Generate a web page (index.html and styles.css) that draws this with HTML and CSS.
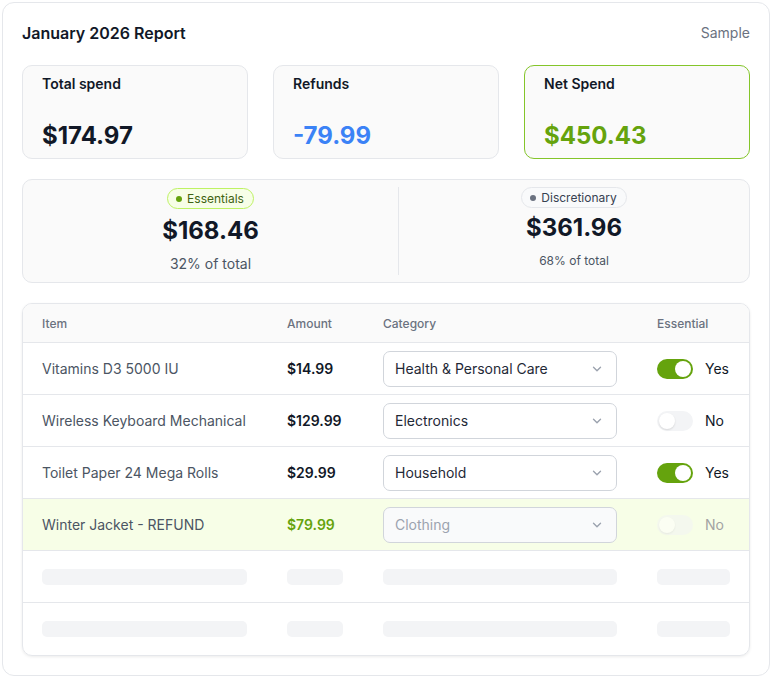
FILE: index.html
```html
<!DOCTYPE html>
<html lang="en">
<head>
<meta charset="utf-8">
<link rel="stylesheet" href="styles.css">
</head>
<body>
<div class="card">
  <div class="head">
    <h1 class="title">January 2026 Report</h1>
    <span class="sample">Sample</span>
  </div>

  <div class="stats">
    <div class="stat">
      <div class="stat-label">Total spend</div>
      <div class="stat-value">$174.97</div>
    </div>
    <div class="stat">
      <div class="stat-label">Refunds</div>
      <div class="stat-value blue">-79.99</div>
    </div>
    <div class="stat stat-net">
      <div class="stat-label">Net Spend</div>
      <div class="stat-value green">$450.43</div>
    </div>
  </div>

  <div class="split">
    <div class="half half-left">
      <span class="pill pill-green"><span class="dot"></span>Essentials</span>
      <div class="half-value">$168.46</div>
      <div class="half-sub">32% of total</div>
    </div>
    <div class="divider"></div>
    <div class="half half-right">
      <span class="pill pill-gray"><span class="dot"></span>Discretionary</span>
      <div class="half-value">$361.96</div>
      <div class="half-sub small">68% of total</div>
    </div>
  </div>

  <div class="table">
    <div class="row header">
      <div class="cell">Item</div>
      <div class="cell">Amount</div>
      <div class="cell">Category</div>
      <div class="cell">Essential</div>
    </div>

    <div class="row">
      <div class="cell item">Vitamins D3 5000 IU</div>
      <div class="cell amount">$14.99</div>
      <div class="cell"><div class="select"><span>Health &amp; Personal Care</span><svg class="chev" viewBox="0 0 12 12"><path d="M3 4.5 6 7.5 9 4.5"/></svg></div></div>
      <div class="cell ess"><span class="toggle on"><span class="knob"></span></span><span class="yn">Yes</span></div>
    </div>

    <div class="row">
      <div class="cell item">Wireless Keyboard Mechanical</div>
      <div class="cell amount">$129.99</div>
      <div class="cell"><div class="select"><span>Electronics</span><svg class="chev" viewBox="0 0 12 12"><path d="M3 4.5 6 7.5 9 4.5"/></svg></div></div>
      <div class="cell ess"><span class="toggle"><span class="knob"></span></span><span class="yn">No</span></div>
    </div>

    <div class="row">
      <div class="cell item">Toilet Paper 24 Mega Rolls</div>
      <div class="cell amount">$29.99</div>
      <div class="cell"><div class="select"><span>Household</span><svg class="chev" viewBox="0 0 12 12"><path d="M3 4.5 6 7.5 9 4.5"/></svg></div></div>
      <div class="cell ess"><span class="toggle on"><span class="knob"></span></span><span class="yn">Yes</span></div>
    </div>

    <div class="row refund">
      <div class="cell item">Winter Jacket - REFUND</div>
      <div class="cell amount green">$79.99</div>
      <div class="cell"><div class="select disabled"><span>Clothing</span><svg class="chev" viewBox="0 0 12 12"><path d="M3 4.5 6 7.5 9 4.5"/></svg></div></div>
      <div class="cell ess"><span class="toggle disabled"><span class="knob"></span></span><span class="yn muted">No</span></div>
    </div>

    <div class="row skel">
      <div class="cell"><span class="bar bar-item"></span></div>
      <div class="cell"><span class="bar bar-amt"></span></div>
      <div class="cell"><span class="bar bar-cat"></span></div>
      <div class="cell"><span class="bar bar-ess"></span></div>
    </div>

    <div class="row skel last">
      <div class="cell"><span class="bar bar-item"></span></div>
      <div class="cell"><span class="bar bar-amt"></span></div>
      <div class="cell"><span class="bar bar-cat"></span></div>
      <div class="cell"><span class="bar bar-ess"></span></div>
    </div>
  </div>
</div>
</body>
</html>
```

FILE: styles.css
```css
* { box-sizing: border-box; }
html, body { margin: 0; padding: 0; background: #ffffff; }
body {
  font-family: Inter, "Noto Sans", "Liberation Sans", sans-serif;
  color: #111827;
  padding: 2px 0 0 2px;
}
.card {
  width: 768px;
  height: 674px;
  border: 1px solid #e5e7eb;
  border-radius: 12px;
  background: #fff;
  padding: 18px 19px 20px 19px;
}
.head {
  display: flex;
  justify-content: space-between;
  align-items: center;
  height: 24px;
}
.title {
  margin: 0;
  font-size: 16px;
  font-weight: 600;
  line-height: 24px;
  color: #111827;
}
.sample {
  font-size: 14px;
  color: #6b7280;
  line-height: 20px;
}
.stats {
  display: grid;
  grid-template-columns: 1fr 1fr 1fr;
  gap: 25px;
  margin-top: 20px;
}
.stat {
  height: 94px;
  background: #fafafa;
  border: 1px solid #e5e7eb;
  border-radius: 10px;
  padding: 8px 19px 0 19px;
  display: flex;
  flex-direction: column;
}
.stat-net { border-color: #84c52a; }
.stat-label {
  font-size: 14px;
  font-weight: 600;
  line-height: 20px;
  color: #111827;
}
.stat-value {
  margin-top: 26px;
  font-size: 24px;
  font-weight: 700;
  line-height: 32px;
  color: #111827;
}
.blue { color: #3b82f6; }
.green { color: #65a30d; }

.split {
  margin-top: 20px;
  height: 104px;
  background: #fafafa;
  border: 1px solid #e5e7eb;
  border-radius: 10px;
  display: flex;
  align-items: stretch;
  padding: 7px 0;
}
.half {
  display: flex;
  flex-direction: column;
  align-items: center;
}
.half-left { width: 375px; flex: none; }
.half-right { flex: 1; }
.divider {
  width: 1px;
  background: #e5e7eb;
}
.pill {
  display: inline-flex;
  align-items: center;
  gap: 5px;
  height: 21px;
  padding: 0 9px 0 8px;
  border-radius: 999px;
  font-size: 12px;
  line-height: 16px;
}
.pill .dot {
  width: 6px;
  height: 6px;
  border-radius: 50%;
}
.pill-green {
  background: #f7fee7;
  border: 1px solid #bef264;
  color: #3f6212;
}
.pill-green .dot { background: #65a30d; }
.pill-gray {
  background: #f9fafb;
  border: 1px solid #e5e7eb;
  color: #374151;
}
.pill-gray .dot { background: #6b7280; }
.half-left .pill { margin-top: 1px; }
.half-value {
  font-size: 24px;
  font-weight: 700;
  line-height: 32px;
  color: #111827;
  margin-top: 6px;
}
.half-right .half-value { margin-top: 4px; }
.half-sub {
  font-size: 14px;
  line-height: 20px;
  color: #4b5563;
  margin-top: 7px;
}
.half-sub.small {
  font-size: 12px;
  margin-top: 7px;
}

.table {
  margin-top: 20px;
  border: 1px solid #e5e7eb;
  border-radius: 10px;
  overflow: hidden;
  box-shadow: 0 1px 3px rgba(0,0,0,0.08);
}
.row {
  display: grid;
  grid-template-columns: 245px 96px 274px 1fr;
  height: 52px;
  align-items: center;
  border-bottom: 1px solid #e5e7eb;
}
.row.last { border-bottom: none; }
.row.header {
  height: 39px;
  background: #fafafa;
  font-size: 12px;
  font-weight: 500;
  color: #6b7280;
}
.cell {
  padding-left: 19px;
  display: flex;
  align-items: center;
  min-width: 0;
}
.item {
  font-size: 14px;
  color: #4b5563;
  white-space: nowrap;
}
.amount {
  font-size: 14px;
  font-weight: 600;
  color: #111827;
}
.amount.green { color: #65a30d; }
.select {
  width: 234px;
  height: 36px;
  border: 1px solid #d1d5db;
  border-radius: 7px;
  background: #fff;
  display: flex;
  align-items: center;
  justify-content: space-between;
  padding: 0 12px 0 11px;
  font-size: 14px;
  color: #1f2937;
}
.select.disabled {
  background: #f9fafb;
  color: #9ca3af;
}
.chev {
  width: 14px;
  height: 14px;
  fill: none;
  stroke: #9ca3af;
  stroke-width: 1.2;
  stroke-linecap: round;
  stroke-linejoin: round;
}
.ess { gap: 12px; }
.toggle {
  width: 36px;
  height: 20px;
  border-radius: 999px;
  background: #f3f4f6;
  position: relative;
  display: inline-block;
}
.toggle .knob {
  position: absolute;
  top: 2px;
  left: 2px;
  width: 16px;
  height: 16px;
  border-radius: 50%;
  background: #fff;
  box-shadow: 0 1px 2px rgba(0,0,0,0.12);
}
.toggle.on { background: #65a30d; }
.toggle.on .knob { left: 18px; box-shadow: none; }
.toggle.disabled { opacity: 0.5; }
.yn {
  font-size: 14px;
  color: #111827;
}
.yn.muted { color: #a3a3a3; }
.refund { background: #f7fee7; }
.bar {
  display: block;
  height: 16px;
  border-radius: 5px;
  background: #f3f4f6;
}
.bar-item { width: 205px; }
.bar-amt { width: 56px; }
.bar-cat { width: 234px; }
.bar-ess { width: 73px; }
```
